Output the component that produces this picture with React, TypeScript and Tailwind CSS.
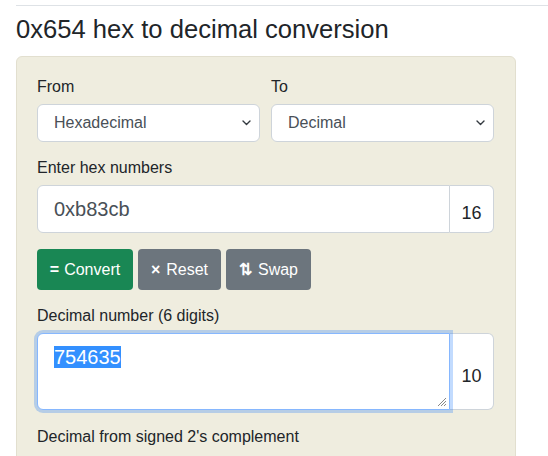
import React from "react";

function Chevron() {
  return (
    <svg width="9" height="6" viewBox="0 0 9 6" className="absolute right-[8px] top-1/2 -translate-y-1/2">
      <path d="M1 1l3.5 3.5L8 1" fill="none" stroke="#343a40" strokeWidth="1.4" strokeLinecap="round" strokeLinejoin="round" />
    </svg>
  );
}

function Select({ value }: { value: string }) {
  return (
    <div className="relative h-[38px] bg-white border border-[#ced4da] rounded-[6px] flex items-center pl-4 text-[16px] text-[#495057]">
      {value}
      <Chevron />
    </div>
  );
}

export default function App() {
  return (
    <div className="w-[548px] h-[456px] overflow-hidden bg-white text-[#212529] font-['Liberation_Sans',Arial,sans-serif]">
      <div className="pt-[5px] pl-4">
        <div className="border-t border-[#dee2e6]" />
        <h2 className="text-[25.6px] leading-[1.2] mt-[8px] mb-[11px] font-normal">0x654 hex to decimal conversion</h2>
        <div className="w-[500px] bg-[#efeddf] border border-[#e2dfcf] rounded-[6px] px-5 pt-[18px] pb-10">
          <div className="grid grid-cols-2 gap-[11px] w-[457px]">
            <div>
              <div className="text-[16px] leading-6 mb-[5px]">From</div>
              <Select value="Hexadecimal" />
            </div>
            <div>
              <div className="text-[16px] leading-6 mb-[5px]">To</div>
              <Select value="Decimal" />
            </div>
          </div>

          <div className="text-[16px] leading-6 mt-[14px] mb-[5px]">Enter hex numbers</div>
          <div className="flex w-[457px] h-[48px]">
            <div className="flex-1 bg-white border border-[#ced4da] rounded-l-[6px] flex items-center pl-4 text-[20px] text-[#495057]">
              0xb83cb
            </div>
            <div className="w-[44px] bg-white border border-l-0 border-[#ced4da] rounded-r-[6px] flex items-center justify-center pt-[10px] text-[18px] text-[#212529]">
              16
            </div>
          </div>

          <div className="flex gap-[5px] mt-[16px]">
            <div className="h-[41px] w-[96px] pt-[2px] rounded-[4px] bg-[#198754] text-white text-[16px] flex items-center justify-center">
              <span className="font-bold mr-[5px]">=</span>Convert
            </div>
            <div className="h-[41px] w-[83px] pt-[2px] rounded-[4px] bg-[#6c757d] text-white text-[16px] flex items-center justify-center">
              <span className="font-bold mr-[6px]">×</span>Reset
            </div>
            <div className="h-[41px] w-[85px] pt-[2px] rounded-[4px] bg-[#6c757d] text-white text-[16px] flex items-center justify-center">
              <span className="font-bold mr-[6px]">⇅</span>Swap
            </div>
          </div>

          <div className="text-[16px] leading-6 mt-[14px] mb-[5px]">Decimal number (6 digits)</div>
          <div className="flex w-[457px] h-[77px]">
            <div className="relative flex-1 bg-white border border-[#86b7fe] rounded-l-[6px] shadow-[0_0_0_3px_rgba(13,110,253,0.25)] z-10 pl-4 pt-[11px] text-[20px] leading-[24px] text-[#495057]">
              <span className="bg-[#3390ff] text-white">754635</span>
              <svg width="10" height="10" viewBox="0 0 10 10" className="absolute right-[2px] bottom-[2px]">
                <path d="M9 1L1 9M9 4L4 9M9 7L7 9" stroke="#888" strokeWidth="1" />
              </svg>
            </div>
            <div className="w-[44px] bg-white border border-l-0 border-[#ced4da] rounded-r-[6px] flex items-center justify-center pt-[10px] text-[18px] text-[#212529]">
              10
            </div>
          </div>

          <div className="text-[16px] leading-6 mt-[15px] mb-[7px]">Decimal from signed 2's complement</div>
          <div className="flex w-[457px] h-[48px]">
            <div className="flex-1 bg-white border border-[#ced4da] rounded-l-[6px]" />
            <div className="w-[44px] bg-white border border-l-0 border-[#ced4da] rounded-r-[6px]" />
          </div>
        </div>
      </div>
    </div>
  );
}
